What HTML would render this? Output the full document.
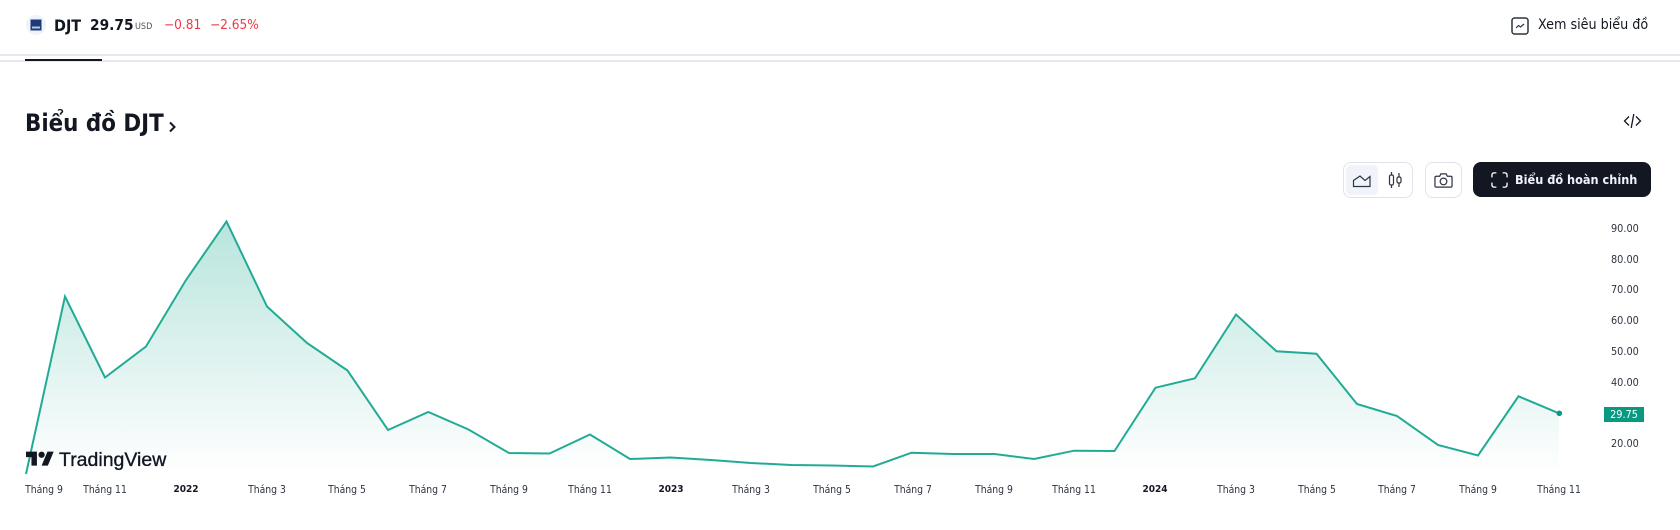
<!DOCTYPE html>
<html><head><meta charset="utf-8"><style>
html,body{margin:0;padding:0;background:#fff}
body{width:1680px;height:530px;position:relative;overflow:hidden;font-family:"DejaVu Sans Condensed","DejaVu Sans","Liberation Sans",sans-serif;font-stretch:condensed;color:#131722}
.a{position:absolute;white-space:nowrap;line-height:1}
.x{position:absolute;top:484px;font-size:10.300px;line-height:12px;color:#2e3442;transform:translateX(-50%);white-space:nowrap}
.x.b{font-weight:700;color:#131722;font-size:10px}
.y{position:absolute;left:1611px;font-size:10.800px;line-height:12px;color:#2e3442}
svg{position:absolute;overflow:visible}
</style></head><body>
<div class="a" style="left:0;top:54px;width:1680px;height:2px;background:#e6e8ef"></div>
<div class="a" style="left:0;top:60px;width:1680px;height:2px;background:#e6e8ef"></div>
<div class="a" style="left:25px;top:59px;width:77px;height:2px;background:#131722"></div>

<svg style="left:26px;top:15px" width="20" height="20" viewBox="0 0 20 20"><circle cx="10" cy="10" r="10" fill="#f0f3fa"/><rect x="4.500" y="4.500" width="11" height="11" fill="#1d3a7a"/><rect x="6" y="11.500" width="8" height="2" fill="#b9c6e4"/></svg>
<div class="a" style="left:54px;top:18px;font-size:16px;font-weight:700">DJT</div>
<div class="a" style="left:90px;top:18px;font-size:15.300px;font-weight:700">29.75</div>
<div class="a" style="left:135px;top:23px;font-size:9px;color:#50535e">USD</div>
<div class="a" style="left:164px;top:19px;font-size:13.500px;color:#f23645">−0.81</div>
<div class="a" style="left:210px;top:19px;font-size:13.500px;color:#f23645">−2.65%</div>

<svg style="left:1511px;top:17px" width="18" height="18" viewBox="0 0 18 18" fill="none" stroke="#2e3442" stroke-width="1.500"><rect x="1" y="1" width="16" height="16" rx="2.500"/><path d="M5 11l2.500-2.500 2 1.500L13 7" stroke-width="1.200"/></svg>
<div class="a" style="left:1538px;top:18px;font-size:14.200px;color:#131722">Xem siêu biểu đồ</div>

<div class="a" style="left:25px;top:109px;font-size:23.800px;font-weight:700;line-height:28px">Biểu đồ DJT</div>
<svg style="left:168px;top:121px" width="10" height="12" viewBox="0 0 10 12" fill="none" stroke="#131722" stroke-width="2"><path d="M2 1.500l4.500 4.500-4.500 4.500"/></svg>

<svg style="left:1623px;top:113px" width="19" height="16" viewBox="0 0 19 16" fill="none" stroke="#131722" stroke-width="1.300"><path d="M6 3.500L1.500 8 6 12.500M13 3.500L17.500 8 13 12.500M10.800 1L8.200 15"/></svg>

<div class="a" style="left:1343px;top:162px;width:68px;height:34px;border:1px solid #e0e3eb;border-radius:8px"></div>
<div class="a" style="left:1346px;top:165px;width:32px;height:30px;background:#f0f3fa;border-radius:5px"></div>
<svg style="left:1352px;top:172px" width="20" height="16" viewBox="0 0 20 16" fill="none" stroke="#2e3442" stroke-width="1.200"><path d="M1.500 14.500h16.500V4.500L13 8.500 8 4 1.500 8.500z"/></svg>
<svg style="left:1388px;top:171px" width="16" height="18" viewBox="0 0 16 18" fill="none" stroke="#2e3442" stroke-width="1.200"><rect x="1.500" y="4" width="4" height="10" rx="1.500"/><path d="M3.500 1v3M3.500 14v3M11 2v4M11 12v4"/><rect x="9" y="6" width="4" height="6" rx="1.500"/></svg>

<div class="a" style="left:1425px;top:162px;width:35px;height:34px;border:1px solid #e0e3eb;border-radius:8px"></div>
<svg style="left:1434px;top:172px" width="19" height="17" viewBox="0 0 20 17" fill="none" stroke="#2e3442" stroke-width="1.300"><path d="M1 5.500q0-1.500 1.500-1.500H6l1.200-2.500h5.600L14 4h3.500Q19 4 19 5.500v8.500q0 1.500-1.500 1.500h-15Q1 15.500 1 14z"/><circle cx="10" cy="9.500" r="3.500"/></svg>

<div class="a" style="left:1473px;top:162px;width:178px;height:35px;background:#131722;border-radius:8px"></div>
<svg style="left:1491px;top:172px" width="17" height="16" viewBox="0 0 19 18" fill="none" stroke="#fff" stroke-width="1.500"><path d="M1 6V3.500Q1 1 3.500 1H6M13 1h2.500Q18 1 18 3.500V6M18 12v2.500q0 2.500-2.500 2.500H13M6 17H3.500Q1 17 1 14.500V12"/></svg>
<div class="a" style="left:1515px;top:174px;font-size:12.600px;font-weight:700;color:#f0f3fa">Biểu đồ hoàn chỉnh</div>

<svg style="left:0;top:0" width="1680" height="530" viewBox="0 0 1680 530">
<defs><linearGradient id="g" gradientUnits="userSpaceOnUse" x1="0" y1="221" x2="0" y2="474"><stop offset="0" stop-color="#22ab94" stop-opacity=".32"/><stop offset="1" stop-color="#22ab94" stop-opacity="0"/></linearGradient></defs>
<path fill="url(#g)" d="M26 474L65 296.500 105 377.500 146 346.500 186 280 226.500 221.500 267 306.500 307 343 347.500 370.500 388 430 428.300 412 468.500 429.500 509 453 549.500 453.500 590 434.500 630 459 670.500 457.500 711 460 751 463 791.500 465 832 465.500 873 466.500 911.500 452.700 953 454 994.500 454 1034 459 1074 450.700 1114.500 451 1155.500 387.700 1195 378.300 1236 314.500 1276.500 351.300 1316.500 353.700 1357 404 1397 416 1438 445 1478 455.500 1518.500 396.300 1559 413.300V474z"/>
<path fill="none" stroke="#22ab94" stroke-width="2" stroke-linejoin="miter" d="M26 474L65 296.500 105 377.500 146 346.500 186 280 226.500 221.500 267 306.500 307 343 347.500 370.500 388 430 428.300 412 468.500 429.500 509 453 549.500 453.500 590 434.500 630 459 670.500 457.500 711 460 751 463 791.500 465 832 465.500 873 466.500 911.500 452.700 953 454 994.500 454 1034 459 1074 450.700 1114.500 451 1155.500 387.700 1195 378.300 1236 314.500 1276.500 351.300 1316.500 353.700 1357 404 1397 416 1438 445 1478 455.500 1518.500 396.300 1559 413.300"/>
<circle cx="1559.300" cy="413.300" r="2.800" fill="#089981"/>
<g transform="translate(26 448.500) scale(.78)" fill="#131722"><path d="M14 22H7V11H0V4h14v18zM28 22h-8l7.500-18h8L28 22z"/><circle cx="20" cy="8" r="4"/></g>
</svg>
<div class="a" style="left:59px;top:449px;font-family:'Liberation Sans',sans-serif;font-stretch:normal;font-size:19.500px;-webkit-text-stroke:.35px #131722;color:#131722;line-height:22px">TradingView</div>

<div class="x" style="left:44px">Tháng 9</div>
<div class="x" style="left:105px">Tháng 11</div>
<div class="x b" style="left:186px">2022</div>
<div class="x" style="left:267px">Tháng 3</div>
<div class="x" style="left:347px">Tháng 5</div>
<div class="x" style="left:428px">Tháng 7</div>
<div class="x" style="left:509px">Tháng 9</div>
<div class="x" style="left:590px">Tháng 11</div>
<div class="x b" style="left:671px">2023</div>
<div class="x" style="left:751px">Tháng 3</div>
<div class="x" style="left:832px">Tháng 5</div>
<div class="x" style="left:913px">Tháng 7</div>
<div class="x" style="left:994px">Tháng 9</div>
<div class="x" style="left:1074px">Tháng 11</div>
<div class="x b" style="left:1155px">2024</div>
<div class="x" style="left:1236px">Tháng 3</div>
<div class="x" style="left:1317px">Tháng 5</div>
<div class="x" style="left:1397px">Tháng 7</div>
<div class="x" style="left:1478px">Tháng 9</div>
<div class="x" style="left:1559px">Tháng 11</div>

<div class="y" style="top:223px">90.00</div>
<div class="y" style="top:254px">80.00</div>
<div class="y" style="top:284px">70.00</div>
<div class="y" style="top:315px">60.00</div>
<div class="y" style="top:346px">50.00</div>
<div class="y" style="top:377px">40.00</div>
<div class="y" style="top:438px">20.00</div>
<div class="a" style="left:1604px;top:407px;width:40px;height:15px;background:#089981;color:#fff;font-size:10.800px;line-height:15px;text-align:center">29.75</div>
</body></html>
